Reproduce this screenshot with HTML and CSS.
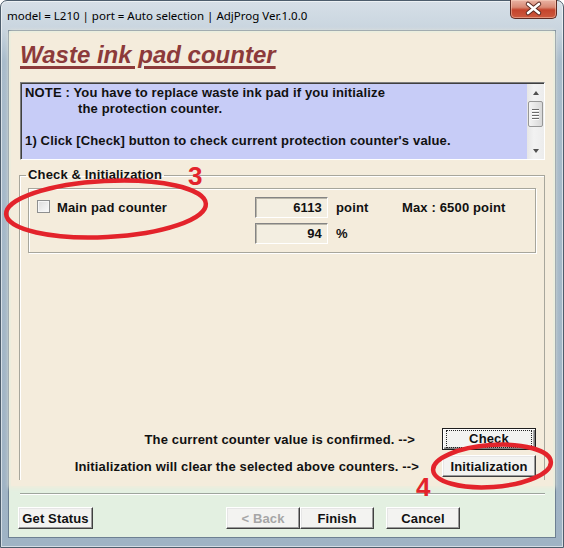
FILE: index.html
```html
<!DOCTYPE html>
<html>
<head>
    <title>Waste ink pad counter</title>
    <link rel="stylesheet" href="styles.css">
</head>
<body>
    <div class="window">
        <div class="titlebar">
            <span class="caption">model = L210 | port = Auto selection | AdjProg Ver.1.0.0</span>
            <div class="close-btn">
                <svg width="47" height="19" viewBox="0 0 47 19">
                    <path d="M18 5 L29 14 M29 5 L18 14" stroke="#5a2a22" stroke-width="4.5" stroke-linecap="round"/>
                    <path d="M18 5 L29 14 M29 5 L18 14" stroke="#ffffff" stroke-width="2.6" stroke-linecap="round"/>
                </svg>
            </div>
        </div>

        <div class="client">
            <div class="panel">
                <h1 class="heading">Waste ink pad counter</h1>

                <div class="note">
                    <div class="note-text">
                        <div>NOTE : You have to replace waste ink pad if you initialize</div>
                        <div class="indent">the protection counter.</div>
                        <div>&nbsp;</div>
                        <div>1) Click [Check] button to check current protection counter's value.</div>
                    </div>
                    <div class="scrollbar">
                        <div class="arrow"><span class="tri up"></span></div>
                        <div class="thumb"><i></i><i></i><i></i><i></i></div>
                        <div class="track"></div>
                        <div class="arrow"><span class="tri down"></span></div>
                    </div>
                </div>

                <fieldset class="group">
                    <legend>Check &amp; Initialization</legend>
                    <div class="counters">
                        <div class="counter-name"><span class="checkbox"></span>Main pad counter</div>
                        <div class="field">6113</div>
                        <div class="unit">point</div>
                        <div class="unit">Max : 6500 point</div>
                        <div></div>
                        <div class="field">94</div>
                        <div class="unit">%</div>
                        <div></div>
                    </div>
                    <div class="actions">
                        <div class="action-row">
                            <span class="action-text first">The current counter value is confirmed. --&gt;</span>
                            <button class="btn wide default"><span class="focus">Check</span></button>
                        </div>
                        <div class="action-row">
                            <span class="action-text">Initialization will clear the selected above counters. --&gt;</span>
                            <button class="btn wide">Initialization</button>
                        </div>
                    </div>
                </fieldset>
            </div>

            <div class="separator"></div>

            <div class="footer">
                <button class="btn status">Get Status</button>
                <div class="nav">
                    <button class="btn nav-btn" disabled>&lt; Back</button>
                    <button class="btn nav-btn">Finish</button>
                    <button class="btn nav-btn cancel">Cancel</button>
                </div>
            </div>
        </div>

        <!-- red hand-drawn marks on the screenshot -->
        <svg class="marks" width="564" height="548" viewBox="0 0 564 548">
            <ellipse cx="106" cy="209" rx="100" ry="28" transform="rotate(-3 106 209)" fill="none" stroke="#e3232b" stroke-width="4.5"/>
            <ellipse cx="492" cy="466" rx="59" ry="21" transform="rotate(-4 492 466)" fill="none" stroke="#e3232b" stroke-width="4.5"/>
            <text x="188" y="185" class="mark-num">3</text>
            <text x="416" y="496" class="mark-num">4</text>
        </svg>
    </div>
</body>
</html>
```

FILE: styles.css
```css
/* Old Windows wizard dialog */
body {
    margin: 0;
    font-family: "Liberation Sans", Arial, sans-serif;
    background: #ffffff;
}

.window {
    position: relative;
    width: 564px;
    height: 548px;
    box-sizing: border-box;
    padding: 0 7px 9px;
    display: flex;
    flex-direction: column;
    border: 1px solid #4d5d6c;
    border-radius: 7px 7px 0 0;
    background: linear-gradient(to bottom, #d6dfe7 0, #c9d5df 28px, #a9bccb 60px, #9fb3c4 100%);
    box-shadow: inset 0 0 0 1px rgba(255, 255, 255, 0.55);
}

.titlebar {
    height: 29px;
    display: flex;
    align-items: flex-start;
    justify-content: space-between;
}

.caption {
    font-family: "Noto Sans", sans-serif;
    font-size: 11.5px;
    margin: 7px 0 0 -1px;
    color: #000000;
    white-space: nowrap;
}

.close-btn {
    width: 47px;
    height: 19px;
    margin: -1px -1px 0 0;
    box-sizing: border-box;
    border: 1px solid #5e2a22;
    border-top: none;
    border-radius: 0 0 5px 5px;
    background: linear-gradient(to bottom, #e9b3a4 0%, #d98a75 40%, #c4442c 55%, #cd5a3f 100%);
    box-shadow: inset 0 0 0 1px rgba(255, 220, 200, 0.45);
}

.close-btn svg {
    display: block;
    margin: -1px 0 0 -1px;
}

.client {
    flex: 1;
    display: flex;
    flex-direction: column;
    border: 1px solid #6d8092;
    background: #e3f0e1;
}

.panel {
    flex: none;
    margin: 2px 2px 0;
    padding: 8px 8px 6px 8px;
    background: #f4ecdc;
    box-shadow: 0 0 4px 2px #f0ecdc;
    letter-spacing: 0.15px;
}

.heading {
    margin: 0 0 13px 1px;
    height: 28px;
    font-size: 24px;
    line-height: 28px;
    font-weight: bold;
    font-style: italic;
    letter-spacing: 0;
    color: #8c3a3a;
    text-decoration: underline;
    text-decoration-thickness: 3px;
    text-underline-offset: 3px;
}

.note {
    display: flex;
    height: 78px;
    margin-left: 1px;
    box-sizing: border-box;
    border: 1px solid;
    border-color: #7d7d7d #ffffff #ffffff #7d7d7d;
    box-shadow: inset 1px 1px 0 #3f3f3f;
    background: #c7ccf7;
}

.note-text {
    flex: 1;
    padding: 2px 0 0 4px;
    font-size: 13px;
    font-weight: bold;
    line-height: 16px;
    color: #111111;
}

.indent {
    padding-left: 53px;
}

.scrollbar {
    width: 17px;
    margin: 1px 0 0;
    display: flex;
    flex-direction: column;
    background: linear-gradient(to right, #e6e6e6, #f2f2f2 40%, #ececec);
}

.arrow {
    height: 17px;
    display: flex;
    align-items: center;
    justify-content: center;
}

.tri {
    width: 0;
    height: 0;
    border-left: 3px solid transparent;
    border-right: 3px solid transparent;
}

.tri.up {
    border-bottom: 4px solid #505050;
}

.tri.down {
    border-top: 4px solid #505050;
}

.thumb {
    height: 26px;
    margin: 0 1px;
    box-sizing: border-box;
    border: 1px solid #979797;
    border-radius: 2px;
    background: linear-gradient(to right, #f4f4f4, #e6e6e6 50%, #d8d8d8);
    display: flex;
    flex-direction: column;
    align-items: center;
    justify-content: center;
    gap: 1px;
}

.thumb i {
    display: block;
    width: 7px;
    height: 1px;
    background: #6b6b6b;
    border-bottom: 1px solid #ffffff;
}

.track {
    flex: 1;
}

.group {
    margin: 7px 0 0;
    padding: 0 8px 3px;
    height: 313px;
    box-sizing: border-box;
    border: 1px solid #a7a69c;
    border-bottom: none;
    box-shadow: inset 1px 1px 0 #ffffff;
}

.group legend {
    margin-left: -2px;
    padding: 0 2px;
    font-size: 13px;
    font-weight: bold;
    line-height: 16px;
    color: #111111;
}

.counters {
    margin-top: 5px;
    height: 65px;
    box-sizing: border-box;
    padding: 8px 0;
    border: 1px solid #a7a69c;
    box-shadow: inset 1px 1px 0 #ffffff, 1px 1px 0 #ffffff;
    display: grid;
    grid-template-columns: 226px 73px 66px 1fr;
    grid-template-rows: 21px 21px;
    row-gap: 5px;
    font-size: 13px;
    font-weight: bold;
    color: #111111;
}

.counter-name {
    display: flex;
    align-items: center;
    padding-left: 8px;
    margin-top: -1px;
}

.checkbox {
    width: 13px;
    height: 13px;
    box-sizing: border-box;
    margin: 0 7px 1px 0;
    border: 1px solid #8e8f8f;
    background: linear-gradient(135deg, #dcdcdc, #fbfbfb);
    box-shadow: inset 0 0 0 1px #f6f6f6;
}

.field {
    box-sizing: border-box;
    border: 1px solid;
    border-color: #848484 #ffffff #ffffff #848484;
    box-shadow: inset 1px 1px 0 #b9b6aa;
    background: #f3eee1;
    text-align: right;
    padding-right: 5px;
    line-height: 19px;
}

.unit {
    padding-left: 8px;
    line-height: 21px;
}

.actions {
    margin-top: 175px;
    display: flex;
    flex-direction: column;
    gap: 5px;
}

.action-row {
    display: flex;
    justify-content: flex-end;
    align-items: center;
    font-size: 13px;
    font-weight: bold;
    color: #111111;
}

.action-text {
    margin-right: 23px;
}

.action-text.first {
    margin-right: 27px;
}

.btn {
    height: 22px;
    padding: 0;
    box-sizing: border-box;
    font-family: "Liberation Sans", Arial, sans-serif;
    font-size: 13px;
    font-weight: bold;
    letter-spacing: 0.15px;
    color: #111111;
    background: #f3f3f1;
    border: 1px solid;
    border-color: #ffffff #404040 #404040 #ffffff;
    box-shadow: inset -1px -1px 0 #9a9a9a, inset 1px 1px 0 #e6e6e6;
}

.btn.wide {
    width: 94px;
}

.btn.default {
    border-color: #1e1e1e;
    box-shadow: inset 1px 1px 0 #ffffff, inset -1px -1px 0 #7f7f7f, inset -2px -2px 0 #a8a8a8;
}

.focus {
    display: block;
    margin: 0 3px;
    height: 16px;
    line-height: 15px;
    border: 1px dotted #222222;
}

.separator {
    height: 1px;
    margin: 7px 10px 0 11px;
    background: #9ea59d;
    border-bottom: 1px solid #ffffff;
}

.footer {
    display: flex;
    margin: 12px 0 0 9px;
}

.btn.status {
    width: 75px;
}

.nav {
    display: flex;
    margin-left: 133px;
}

.btn.nav-btn {
    width: 74px;
}

.btn.cancel {
    margin-left: 12px;
}

.btn:disabled {
    color: #a6a6a6;
}

.marks {
    position: absolute;
    left: -1px;
    top: -1px;
    pointer-events: none;
}

.mark-num {
    font-family: "Liberation Sans", Arial, sans-serif;
    font-size: 26px;
    font-weight: bold;
    fill: #e3232b;
}
```
